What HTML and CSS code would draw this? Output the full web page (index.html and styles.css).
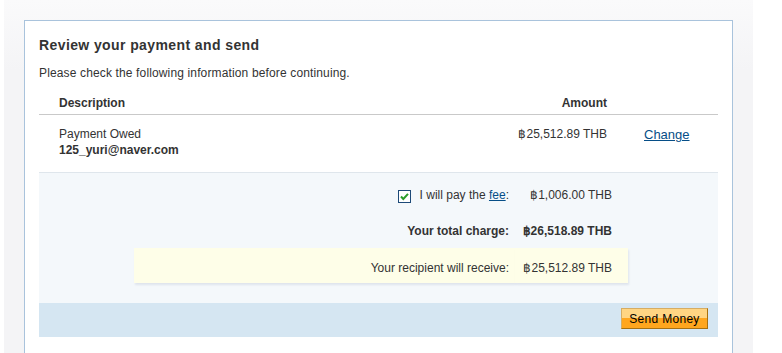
FILE: index.html
```html
<!DOCTYPE html>
<html lang="en">
<head>
    <meta charset="UTF-8">
    <title>Review your payment and send</title>
    <link rel="stylesheet" href="styles.css">
</head>
<body>
    <div class="page">
        <div class="box">
            <h2>Review your payment and send</h2>
            <p class="intro">Please check the following information before continuing.</p>

            <div class="grid head">
                <div class="desc">Description</div>
                <div class="amt">Amount</div>
                <div></div>
            </div>
            <div class="grid item">
                <div class="desc">
                    Payment Owed<br>
                    <strong>125_yuri@naver.com</strong>
                </div>
                <div class="amt">฿25,512.89 THB</div>
                <div class="chg"><a href="#">Change</a></div>
            </div>

            <div class="summary">
                <div class="totals">
                    <div class="lbl fee">
                        <span class="check">
                            <svg width="13" height="13" viewBox="0 0 13 13">
                                <rect x="0.5" y="0.5" width="12" height="12" fill="#fff" stroke="#1d4a78"/>
                                <path d="M3 6.5 L5.3 9 L10 3.8" fill="none" stroke="#2a9d2a" stroke-width="2"/>
                            </svg>
                        </span>
                        I will pay the <a href="#">fee</a>:
                    </div>
                    <div class="val fee">฿1,006.00 THB</div>

                    <div class="lbl total">Your total charge:</div>
                    <div class="val total">฿26,518.89 THB</div>

                    <div class="lbl recv">Your recipient will receive:</div>
                    <div class="val recv">฿25,512.89 THB</div>
                </div>
            </div>

            <div class="actions">
                <button class="send">Send Money</button>
            </div>
        </div>
    </div>
</body>
</html>
```

FILE: styles.css
```css
body {
    margin: 0;
    background: #fff;
    font-family: "Liberation Sans", Arial, sans-serif;
    font-size: 12px;
    color: #333;
}
.page {
    margin-left: 4px;
    width: 709px;
    height: 333px;
    padding: 20px 20px 0 20px;
    background: linear-gradient(#fafafb, #f4f4f6 70px);
    overflow: hidden;
}
.box {
    background: #fff;
    border: 1px solid #a9c3dc;
    border-bottom: none;
    padding: 16px 14px 20px 14px;
    height: 380px;
}
h2 {
    margin: 0 0 13px 0;
    font-size: 14px;
    line-height: 16px;
    letter-spacing: 0.4px;
    color: #333;
}
.intro {
    margin: 0 0 15px 0;
    line-height: 15px;
    letter-spacing: 0.14px;
}
a {
    color: #064e87;
}
.grid {
    display: grid;
    grid-template-columns: 1fr 140px 106px;
}
.desc {
    padding-left: 20px;
}
.amt {
    text-align: right;
    padding-right: 5px;
}
.head {
    font-weight: bold;
    line-height: 15px;
    padding-bottom: 3px;
    border-bottom: 1px solid #c9c9c9;
}
.item {
    line-height: 16px;
    padding: 11px 0 14px 0;
    border-bottom: 1px solid #dfe6ec;
}
.chg {
    padding-left: 32px;
    padding-top: 1px;
    font-size: 13px;
}
.summary {
    background: #f4f8fb;
    padding: 15px 0 20px 95px;
}
.totals {
    display: grid;
    grid-template-columns: 381px 113px;
    line-height: 15px;
}
.lbl {
    text-align: right;
    padding-right: 6px;
}
.val {
    text-align: right;
    padding-right: 16px;
}
.fee {
    height: 36px;
}
.check {
    display: inline-block;
    vertical-align: -4px;
    margin-right: 5px;
}
.check svg {
    display: block;
}
.total {
    height: 24px;
    font-weight: bold;
}
.recv {
    background: #fefee8;
    padding-top: 13px;
    height: 22px;
    box-shadow: 1px 2px 2px rgba(40, 60, 110, 0.1);
}
.actions {
    background: #d5e6f2;
    height: 34px;
    padding: 5px 10px 0 0;
    box-sizing: border-box;
    text-align: right;
}
.send {
    width: 87px;
    height: 21px;
    padding: 0;
    font-family: "Liberation Sans", Arial, sans-serif;
    font-size: 12px;
    letter-spacing: 0.3px;
    color: #000;
    background: linear-gradient(#ffd583 0, #ffd583 50%, #ffa61e 50%, #ffa61e 100%);
    border: 1px solid;
    border-color: #d6ad63 #a8700f #a8700f #d6ad63;
    cursor: pointer;
}
```
